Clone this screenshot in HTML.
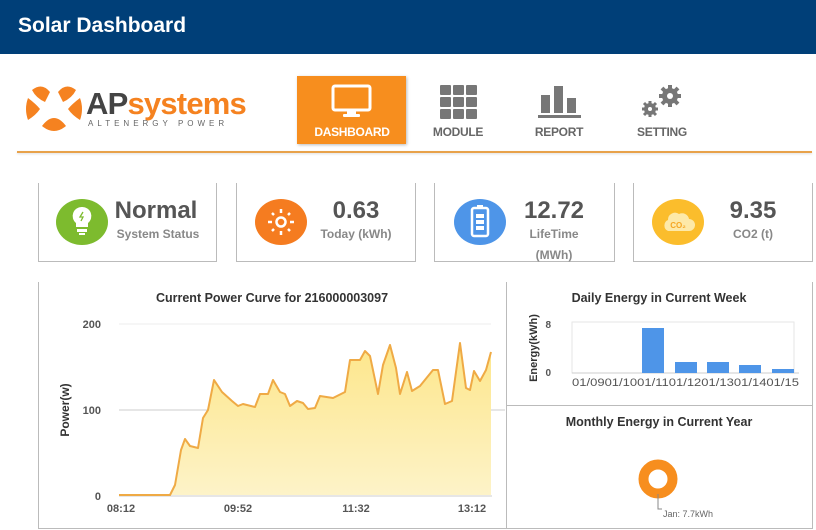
<!DOCTYPE html>
<html><head><meta charset="utf-8"><style>
*{margin:0;padding:0;box-sizing:border-box}
body{width:816px;height:530px;overflow:hidden;background:#fff;font-family:"Liberation Sans",Arial,sans-serif;position:relative}
.a{position:absolute}
.hdr{left:0;top:0;width:816px;height:54px;background:#003f78;color:#fff;font-weight:bold;font-size:21px;padding:14px 0 0 18px}
.nav{font-size:12px;font-weight:bold;color:#666;text-align:center;width:100px;letter-spacing:-0.3px}
.card{border:1px solid #bbb;border-top:none;background:#fff;height:79px;top:183px}
.big{font-size:24px;font-weight:bold;color:#555;text-align:center}
.sm{font-size:12px;font-weight:bold;color:#888;text-align:center}
</style></head><body>
<div class="a hdr">Solar Dashboard</div>

<svg class="a" style="left:26px;top:84px" width="56" height="50" viewBox="0 0 56 50">
<g fill="#f58220">
<path d="M6 6 Q16 -2 24 8 L19 18 Q10 14 6 6Z"/>
<path d="M50 6 Q40 -2 32 8 L37 18 Q46 14 50 6Z"/>
<path d="M2 14 Q10 20 14 25 Q10 31 2 36 Q-2 25 2 14Z"/>
<path d="M54 14 Q46 20 42 25 Q46 31 54 36 Q58 25 54 14Z"/>
<path d="M16 42 Q22 34 28 34 Q34 34 40 42 Q28 52 16 42Z"/>
</g></svg>
<div class="a" style="left:86px;top:86px;font-size:31px;font-weight:bold;color:#444;letter-spacing:-0.8px">AP<span style="color:#f58220">systems</span></div>
<div class="a" style="left:88px;top:119px;font-size:8px;color:#666;letter-spacing:4px">ALTENERGY POWER</div>

<div class="a" style="left:297px;top:76px;width:109px;height:68px;background:#f78e1e;box-shadow:1px 1px 3px #bbb"></div>
<svg class="a" style="left:330px;top:84px" width="44" height="34"><rect x="3" y="2" width="37" height="24" rx="2" fill="none" stroke="#fff" stroke-width="3"/><rect x="17" y="27" width="9" height="3" fill="#fff"/><rect x="13" y="30" width="17" height="3" rx="1" fill="#fff"/></svg>
<div class="a nav" style="left:302px;top:125px;color:#fff">DASHBOARD</div>

<svg class="a" style="left:440px;top:85px" width="38" height="34" fill="#777"><rect x="0" y="0" width="11" height="10" rx="1"/><rect x="13" y="0" width="11" height="10" rx="1"/><rect x="26" y="0" width="11" height="10" rx="1"/><rect x="0" y="12" width="11" height="10" rx="1"/><rect x="13" y="12" width="11" height="10" rx="1"/><rect x="26" y="12" width="11" height="10" rx="1"/><rect x="0" y="24" width="11" height="10" rx="1"/><rect x="13" y="24" width="11" height="10" rx="1"/><rect x="26" y="24" width="11" height="10" rx="1"/></svg>
<div class="a nav" style="left:408px;top:125px">MODULE</div>

<svg class="a" style="left:538px;top:85px" width="44" height="34" fill="#777"><rect x="3" y="10" width="9" height="18"/><rect x="16" y="1" width="9" height="27"/><rect x="29" y="13" width="9" height="15"/><rect x="0" y="30" width="43" height="3"/></svg>
<div class="a nav" style="left:509px;top:125px">REPORT</div>

<svg class="a" style="left:640px;top:84px" width="46" height="34" fill="#777">
<circle cx="30" cy="12" r="8"/><g stroke="#777" stroke-width="4"><line x1="30" y1="1" x2="30" y2="23"/><line x1="19" y1="12" x2="41" y2="12"/><line x1="22" y1="4" x2="38" y2="20"/><line x1="38" y1="4" x2="22" y2="20"/></g><circle cx="30" cy="12" r="3" fill="#fff"/>
<circle cx="10" cy="25" r="6"/><g stroke="#777" stroke-width="3"><line x1="10" y1="17" x2="10" y2="33"/><line x1="2" y1="25" x2="18" y2="25"/><line x1="4" y1="19" x2="16" y2="31"/><line x1="16" y1="19" x2="4" y2="31"/></g><circle cx="10" cy="25" r="2" fill="#fff"/></svg>
<div class="a nav" style="left:612px;top:125px">SETTING</div>

<div class="a" style="left:17px;top:151px;width:795px;height:2px;background:#e8a24a;box-shadow:0 1px 2px #ddd"></div>

<div class="a card" style="left:38px;width:179px"></div>
<div class="a" style="left:56px;top:199px;width:52px;height:46px;border-radius:50%;background:#7dbb2e"></div>
<svg class="a" style="left:70px;top:205px" width="24" height="34"><path d="M12 2 a9 9 0 0 1 6 16 v4 h-12 v-4 a9 9 0 0 1 6 -16z" fill="#fff"/><rect x="7" y="24" width="10" height="3" fill="#fff"/><rect x="9" y="28" width="6" height="2" fill="#fff"/><path d="M13 7 l-3 5 h3 l-2 4" stroke="#7dbb2e" stroke-width="1.3" fill="none"/></svg>
<div class="a big" style="left:110px;top:197px;width:92px">Normal</div>
<div class="a sm" style="left:110px;top:227px;width:96px">System Status</div>

<div class="a card" style="left:236px;width:180px"></div>
<div class="a" style="left:255px;top:199px;width:52px;height:46px;border-radius:50%;background:#f57c20"></div>
<svg class="a" style="left:266px;top:207px" width="30" height="30" stroke="#fff" stroke-width="2.5"><circle cx="15" cy="15" r="4.5" fill="none"/><line x1="15" y1="2" x2="15" y2="6"/><line x1="15" y1="24" x2="15" y2="28"/><line x1="2" y1="15" x2="6" y2="15"/><line x1="24" y1="15" x2="28" y2="15"/><line x1="6" y1="6" x2="8" y2="8"/><line x1="22" y1="22" x2="24" y2="24"/><line x1="24" y1="6" x2="22" y2="8"/><line x1="6" y1="24" x2="8" y2="22"/></svg>
<div class="a big" style="left:310px;top:197px;width:92px">0.63</div>
<div class="a sm" style="left:306px;top:227px;width:100px">Today (kWh)</div>

<div class="a card" style="left:434px;width:181px"></div>
<div class="a" style="left:454px;top:199px;width:52px;height:46px;border-radius:50%;background:#4e95e8"></div>
<svg class="a" style="left:468px;top:203px" width="24" height="38"><rect x="9" y="2" width="6" height="3" fill="#fff"/><rect x="4" y="5" width="16" height="28" rx="2" fill="none" stroke="#fff" stroke-width="2.5"/><rect x="8" y="11" width="8" height="4" fill="#fff"/><rect x="8" y="17" width="8" height="4" fill="#fff"/><rect x="8" y="23" width="8" height="4" fill="#fff"/></svg>
<div class="a big" style="left:508px;top:197px;width:92px">12.72</div>
<div class="a sm" style="left:504px;top:227px;width:100px">LifeTime</div>
<div class="a sm" style="left:504px;top:248px;width:100px">(MWh)</div>

<div class="a card" style="left:633px;width:180px"></div>
<div class="a" style="left:652px;top:199px;width:52px;height:46px;border-radius:50%;background:#fbbd2c"></div>
<svg class="a" style="left:660px;top:209px" width="36" height="26"><path d="M8 22 a6 6 0 0 1 0-11 a7 7 0 0 1 11-6 a7 7 0 0 1 10 5 a6 6 0 0 1 0 12z" fill="#fde9a8"/><text x="18" y="19" font-size="8" font-weight="bold" fill="#f5a623" text-anchor="middle" font-family="Liberation Sans">CO₂</text></svg>
<div class="a big" style="left:707px;top:197px;width:92px">9.35</div>
<div class="a sm" style="left:707px;top:227px;width:92px">CO2 (t)</div>

<div class="a" style="left:38px;top:282px;width:775px;height:247px;border:1px solid #bbb;border-top:none"></div>
<div class="a" style="left:506px;top:282px;width:1px;height:247px;background:#bbb"></div>
<div class="a" style="left:506px;top:405px;width:307px;height:1px;background:#bbb"></div>

<svg class="a" style="left:0;top:0" width="816" height="530" font-family="Liberation Sans,sans-serif">
<defs><linearGradient id="g" x1="0" y1="0" x2="0" y2="1"><stop offset="0" stop-color="#fde68a"/><stop offset="1" stop-color="#fdf3c8"/></linearGradient></defs>
<text x="272" y="302" font-size="12.5" font-weight="bold" fill="#333" text-anchor="middle">Current Power Curve for 216000003097</text>
<line x1="119" y1="324" x2="491" y2="324" stroke="#eee"/>
<line x1="119" y1="410" x2="505" y2="410" stroke="#ccc"/>
<line x1="119" y1="496" x2="492" y2="496" stroke="#ccc"/>
<text x="101" y="328" font-size="11" font-weight="bold" fill="#555" text-anchor="end">200</text>
<text x="101" y="414" font-size="11" font-weight="bold" fill="#555" text-anchor="end">100</text>
<text x="101" y="500" font-size="11" font-weight="bold" fill="#555" text-anchor="end">0</text>
<text transform="translate(69,410) rotate(-90)" font-size="12" font-weight="bold" fill="#333" text-anchor="middle">Power(w)</text>
<text x="121" y="512" font-size="11" font-weight="bold" fill="#555" text-anchor="middle">08:12</text>
<text x="238" y="512" font-size="11" font-weight="bold" fill="#555" text-anchor="middle">09:52</text>
<text x="356" y="512" font-size="11" font-weight="bold" fill="#555" text-anchor="middle">11:32</text>
<text x="472" y="512" font-size="11" font-weight="bold" fill="#555" text-anchor="middle">13:12</text>
<path d="M119 495 L170 495 L175 485 L181 450 L185 439 L190 446 L198 448 L203 418 L208 410 L214 380 L222 392 L232 401 L238 406 L243 404 L255 407 L260 394 L268 394 L273 380 L280 392 L285 394 L290 406 L297 401 L303 403 L308 409 L315 408 L320 396 L333 398 L345 392 L350 360 L357 360 L360 360 L365 351 L370 356 L378 394 L383 365 L390 345 L396 368 L400 394 L407 372 L412 391 L420 386 L433 370 L438 370 L445 404 L452 401 L460 343 L466 388 L470 390 L474 371 L480 381 L486 370 L491 352 L491 495 Z" fill="url(#g)" stroke="none"/>
<path d="M119 495 L170 495 L175 485 L181 450 L185 439 L190 446 L198 448 L203 418 L208 410 L214 380 L222 392 L232 401 L238 406 L243 404 L255 407 L260 394 L268 394 L273 380 L280 392 L285 394 L290 406 L297 401 L303 403 L308 409 L315 408 L320 396 L333 398 L345 392 L350 360 L357 360 L360 360 L365 351 L370 356 L378 394 L383 365 L390 345 L396 368 L400 394 L407 372 L412 391 L420 386 L433 370 L438 370 L445 404 L452 401 L460 343 L466 388 L470 390 L474 371 L480 381 L486 370 L491 352" fill="none" stroke="#efaa45" stroke-width="2" stroke-linejoin="round"/>

<text x="659" y="302" font-size="12.5" font-weight="bold" fill="#333" text-anchor="middle">Daily Energy in Current Week</text>
<text transform="translate(537,348) rotate(-90)" font-size="11" font-weight="bold" fill="#333" text-anchor="middle">Energy(kWh)</text>
<text x="551" y="328" font-size="10" font-weight="bold" fill="#555" text-anchor="end">8</text>
<text x="551" y="376" font-size="10" font-weight="bold" fill="#555" text-anchor="end">0</text>
<rect x="572" y="322" width="222" height="51" fill="none" stroke="#e6e6e6"/>
<line x1="572" y1="373" x2="799" y2="373" stroke="#ccc"/>
<g fill="#4e95e8">
<rect x="642" y="328" width="22" height="45"/><rect x="675" y="362" width="22" height="11"/><rect x="707" y="362" width="22" height="11"/><rect x="739" y="365" width="22" height="8"/><rect x="772" y="369" width="22" height="4"/></g>
<text x="572" y="386" font-size="11" fill="#555" textLength="227" lengthAdjust="spacingAndGlyphs">01/0901/1001/1101/1201/1301/1401/15</text>

<text x="659" y="426" font-size="12.5" font-weight="bold" fill="#333" text-anchor="middle">Monthly Energy in Current Year</text>
<circle cx="658" cy="479" r="14.5" fill="none" stroke="#f78e1e" stroke-width="10"/>
<path d="M658 494 V509 H662" fill="none" stroke="#888"/>
<text x="663" y="517" font-size="9" fill="#666">Jan: 7.7kWh</text>
</svg>
</body></html>
